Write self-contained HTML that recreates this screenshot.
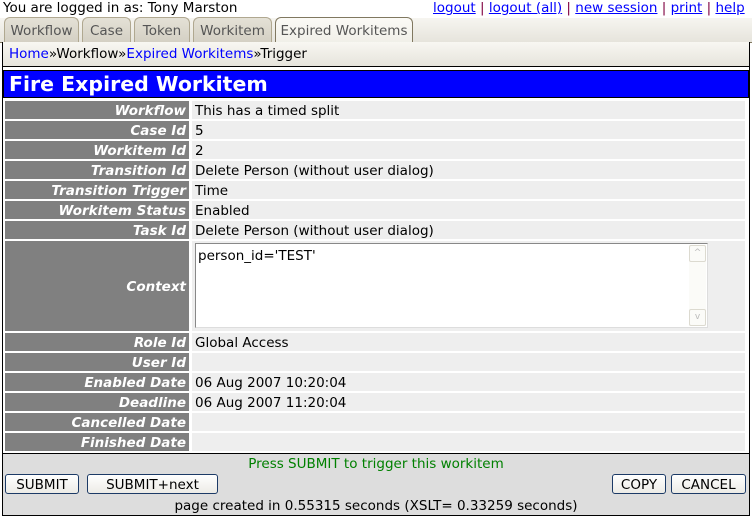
<!DOCTYPE html>
<html><head><style>
*{margin:0;padding:0;box-sizing:border-box}
body{width:752px;height:516px;background:#fff;font-family:"DejaVu Sans",Verdana,sans-serif;font-size:13.5px;color:#000;position:relative;overflow:hidden}
.a{position:absolute;white-space:nowrap}
a{color:#00f}
.tab{position:absolute;top:17px;height:25px;border:1px solid #b0a890;border-bottom:none;border-radius:6px 6px 0 0;background:linear-gradient(#e4e1d6,#d4d0c4);color:#555;padding:5px 0 0 0;text-align:center}
.lbl{position:absolute;left:5px;width:184px;height:18px;background:#808080;color:#fff;font-weight:bold;font-style:italic;text-align:right;padding:2px 3px 0 0;font-size:13.5px}
.val{position:absolute;left:192px;width:553px;height:18px;background:#eee;padding:2px 3px 0 3px;white-space:nowrap}
.btn{position:absolute;top:474px;height:20px;border:1px solid #1c3a66;border-radius:3px;background:linear-gradient(#fff,#ecebe6);font-size:13.5px;text-align:center;padding-top:2px}
</style></head><body>
<div class="a" style="left:3px;top:0px">You are logged in as: Tony Marston</div>
<div class="a" style="left:433px;top:0px;color:#800040"><a href="#">logout</a> | <a href="#">logout (all)</a> | <a href="#">new session</a> | <a href="#">print</a> | <a href="#">help</a></div>
<div class="a" style="left:0;top:18px;width:752px;height:25px;background:linear-gradient(#f6f5f0,#e6e4dc);border-bottom:1px solid #807860"></div>
<div class="tab" style="left:4px;width:75px">Workflow</div>
<div class="tab" style="left:82px;width:49px">Case</div>
<div class="tab" style="left:134px;width:56px">Token</div>
<div class="tab" style="left:193px;width:79px">Workitem</div>
<div class="tab" style="left:275px;width:138px;height:26px;background:linear-gradient(#fbfaf6,#f0efe8);border-color:#807860">Expired Workitems</div>
<div class="a" style="left:2px;top:42px;width:748px;height:474px;border:1px solid #000;border-top:none"></div>
<div class="a" style="left:3px;top:42px;width:746px;height:25px;background:linear-gradient(#f8f7f2,#e6e4dc);border-bottom:1px solid #000;padding:4px 0 0 6px"><a href="#" style="text-decoration:none">Home</a>»Workflow»<a href="#" style="text-decoration:none">Expired Workitems</a>»Trigger</div>
<div class="a" style="left:3px;top:70px;width:746px;height:28px;background:#00f;border:1px solid #000;color:#fff;font-weight:bold;font-size:20.5px;padding:1px 0 0 5px">Fire Expired Workitem</div>

<div class="lbl" style="top:101px">Workflow</div><div class="val" style="top:101px">This has a timed split</div>
<div class="lbl" style="top:121px">Case Id</div><div class="val" style="top:121px">5</div>
<div class="lbl" style="top:141px">Workitem Id</div><div class="val" style="top:141px">2</div>
<div class="lbl" style="top:161px">Transition Id</div><div class="val" style="top:161px">Delete Person (without user dialog)</div>
<div class="lbl" style="top:181px">Transition Trigger</div><div class="val" style="top:181px">Time</div>
<div class="lbl" style="top:201px">Workitem Status</div><div class="val" style="top:201px">Enabled</div>
<div class="lbl" style="top:221px">Task Id</div><div class="val" style="top:221px">Delete Person (without user dialog)</div>
<div class="lbl" style="top:241px;height:90px;padding-top:38px">Context</div><div class="val" style="top:241px;height:90px"></div>
<div class="a" style="left:195px;top:243px;width:513px;height:85px;background:#fff;border:1px solid #888;border-right-color:#ddd;border-bottom-color:#ddd;padding:4px 2px;font-size:13.5px">person_id='TEST'</div>
<div class="a" style="left:689px;top:245px;width:17px;height:81px;background:#fbfbf8"></div>
<div class="a" style="left:689px;top:245px;width:17px;height:17px;border:1px solid #dcdad0;border-radius:2px;color:#bbb;font-size:9px;text-align:center;line-height:15px">^</div>
<div class="a" style="left:689px;top:309px;width:17px;height:17px;border:1px solid #dcdad0;border-radius:2px;color:#bbb;font-size:9px;text-align:center;line-height:15px">v</div>
<div class="lbl" style="top:333px">Role Id</div><div class="val" style="top:333px">Global Access</div>
<div class="lbl" style="top:353px">User Id</div><div class="val" style="top:353px"></div>
<div class="lbl" style="top:373px">Enabled Date</div><div class="val" style="top:373px">06 Aug 2007 10:20:04</div>
<div class="lbl" style="top:393px">Deadline</div><div class="val" style="top:393px">06 Aug 2007 11:20:04</div>
<div class="lbl" style="top:413px">Cancelled Date</div><div class="val" style="top:413px"></div>
<div class="lbl" style="top:433px">Finished Date</div><div class="val" style="top:433px"></div>
<div class="a" style="left:3px;top:453px;width:746px;height:62px;background:#ddd;border-top:1px solid #000"></div>
<div class="a" style="left:3px;top:456px;width:746px;text-align:center;color:#008000">Press SUBMIT to trigger this workitem</div>
<div class="btn" style="left:5px;width:74px">SUBMIT</div>
<div class="btn" style="left:87px;width:131px">SUBMIT+next</div>
<div class="btn" style="left:612px;width:54px">COPY</div>
<div class="btn" style="left:671px;width:75px">CANCEL</div>
<div class="a" style="left:3px;top:498px;width:746px;text-align:center">page created in 0.55315 seconds (XSLT= 0.33259 seconds)</div>
</body></html>
